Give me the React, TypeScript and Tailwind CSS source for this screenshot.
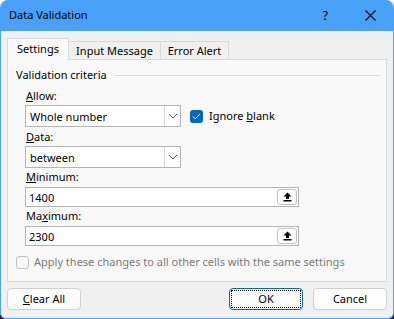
const font = { fontFamily: '"Noto Sans", "Open Sans", sans-serif' };

function Chevron() {
    return (
        <svg width="10" height="6" viewBox="0 0 10 6" fill="none">
            <path d="M1 1l4 4 4-4" stroke="#555" strokeWidth="1" />
        </svg>
    );
}

function Combo({ value }: { value: string }) {
    return (
        <div className="flex h-[22px] w-[156px] items-center border border-[#b4b4b4] bg-white">
            <span className="flex-1 pl-[4px] text-[11px] leading-none text-black">{value}</span>
            <div className="flex h-[20px] w-[16px] items-center justify-center border-l border-[#d6d6d6]">
                <Chevron />
            </div>
        </div>
    );
}

function RangeInput({ value }: { value: string }) {
    return (
        <div className="flex h-[20px] w-[274px] items-center border border-[#b4b4b4] bg-white pr-[1px]">
            <span className="flex-1 pl-[3px] text-[11px] leading-none text-black">{value}</span>
            <div className="flex h-[16px] w-[20px] items-center justify-center rounded-[3px] border border-[#c4c4c4] bg-[#fdfdfd]">
                <svg width="9" height="10" viewBox="0 0 9 10">
                    <path d="M4.5 0.5L8.5 4.5H6V7H3V4.5H0.5Z" fill="#000" />
                    <rect x="0.5" y="8" width="8" height="1.5" fill="#000" />
                </svg>
            </div>
        </div>
    );
}

function Label({ children }: { children: React.ReactNode }) {
    return <div className="ml-[1px] h-[14px] text-[11px] leading-[14px] text-black">{children}</div>;
}

export default function App() {
    return (
        <div className="h-[319px] w-[394px] bg-gradient-to-b from-white to-[#3a0f3a]" style={font}>
            <div className="flex h-full w-full flex-col overflow-hidden rounded-t-[8px] rounded-b-[6px] border border-t-0 border-[#49a0f7] bg-[#f0f0f0]">
                <div className="flex h-[31px] shrink-0 items-center bg-[#49a0f7] pl-[8px] text-[11px] text-black">
                    <span className="flex-1">Data Validation</span>
                    <span className="mr-[37px] text-[12px]">?</span>
                    <svg width="11" height="11" viewBox="0 0 11 11" className="mr-[17px]">
                        <path d="M0.5 0.5l10 10M10.5 0.5l-10 10" stroke="#111" strokeWidth="1.2" />
                    </svg>
                </div>

                <div className="flex flex-1 flex-col px-[6px]">
                    <div className="mt-[7px] flex h-[22px] items-end text-[11px] text-black">
                        <div className="relative z-10 flex h-[22px] w-[62px] items-center justify-center border border-b-0 border-[#d9d9d9] bg-[#f9f9f9] pb-[1px]">
                            Settings
                        </div>
                        <div className="flex h-[19px] w-[92px] items-center justify-center border border-b-0 border-l-0 border-[#d9d9d9] bg-[#f0f0f0]">
                            Input Message
                        </div>
                        <div className="flex h-[19px] w-[68px] items-center justify-center border border-b-0 border-l-0 border-[#d9d9d9] bg-[#f0f0f0]">
                            Error Alert
                        </div>
                    </div>

                    <div className="-mt-px flex h-[223px] flex-col border border-[#d9d9d9] bg-[#f9f9f9] pl-[8px] pr-[6px]">
                        <div className="mt-[7px] flex h-[16px] items-center text-[11px] text-black">
                            <span>Validation criteria</span>
                            <div className="ml-[6px] h-px flex-1 bg-[#dcdcdc]" />
                        </div>

                        <div className="pl-[9px]">
                            <div className="mt-[6px]"><Label><u>A</u>llow:</Label></div>
                            <div className="mt-[2px] flex items-center">
                                <Combo value="Whole number" />
                                <div className="ml-[9px] flex h-[13px] w-[13px] items-center justify-center rounded-[3px] bg-[#0067c0]">
                                    <svg width="9" height="7" viewBox="0 0 9 7" fill="none">
                                        <path d="M1 3.5l2.3 2.3L8 1" stroke="#fff" strokeWidth="1" />
                                    </svg>
                                </div>
                                <span className="ml-[6px] text-[11px] text-black">Ignore <u>b</u>lank</span>
                            </div>

                            <div className="mt-[3px]"><Label><u>D</u>ata:</Label></div>
                            <div className="mt-[2px]"><Combo value="between" /></div>

                            <div className="mt-[2px]"><Label><u>M</u>inimum:</Label></div>
                            <div className="mt-[3px]"><RangeInput value="1400" /></div>

                            <div className="mt-[2px]"><Label>Ma<u>x</u>imum:</Label></div>
                            <div className="mt-[3px]"><RangeInput value="2300" /></div>
                        </div>

                        <div className="mt-[8px] flex items-center">
                            <div className="h-[13px] w-[13px] rounded-[3px] border border-[#c2c2c2] bg-[#f7f7f7]" />
                            <span className="ml-[5px] text-[11px] text-[#7a7a7a]">
                                Apply these changes to all other cells with the same settings
                            </span>
                        </div>
                    </div>

                    <div className="mt-[6px] flex h-[22px] items-center text-[11px] text-black">
                        <button className="flex h-[22px] w-[74px] items-center justify-center rounded-[4px] border border-[#d0d0d0] bg-[#fdfdfd]">
                            <u>C</u>lear All
                        </button>
                        <div className="flex-1" />
                        <button className="flex h-[22px] w-[74px] items-center justify-center rounded-[4px] border-[1.5px] border-[#0067c0] bg-[#fdfdfd] p-[1px]">
                            <span className="flex h-full w-full items-center justify-center border border-dotted border-black">OK</span>
                        </button>
                        <button className="ml-[10px] flex h-[22px] w-[74px] items-center justify-center rounded-[4px] border border-[#d0d0d0] bg-[#fdfdfd]">
                            Cancel
                        </button>
                    </div>
                </div>
            </div>
        </div>
    );
}
